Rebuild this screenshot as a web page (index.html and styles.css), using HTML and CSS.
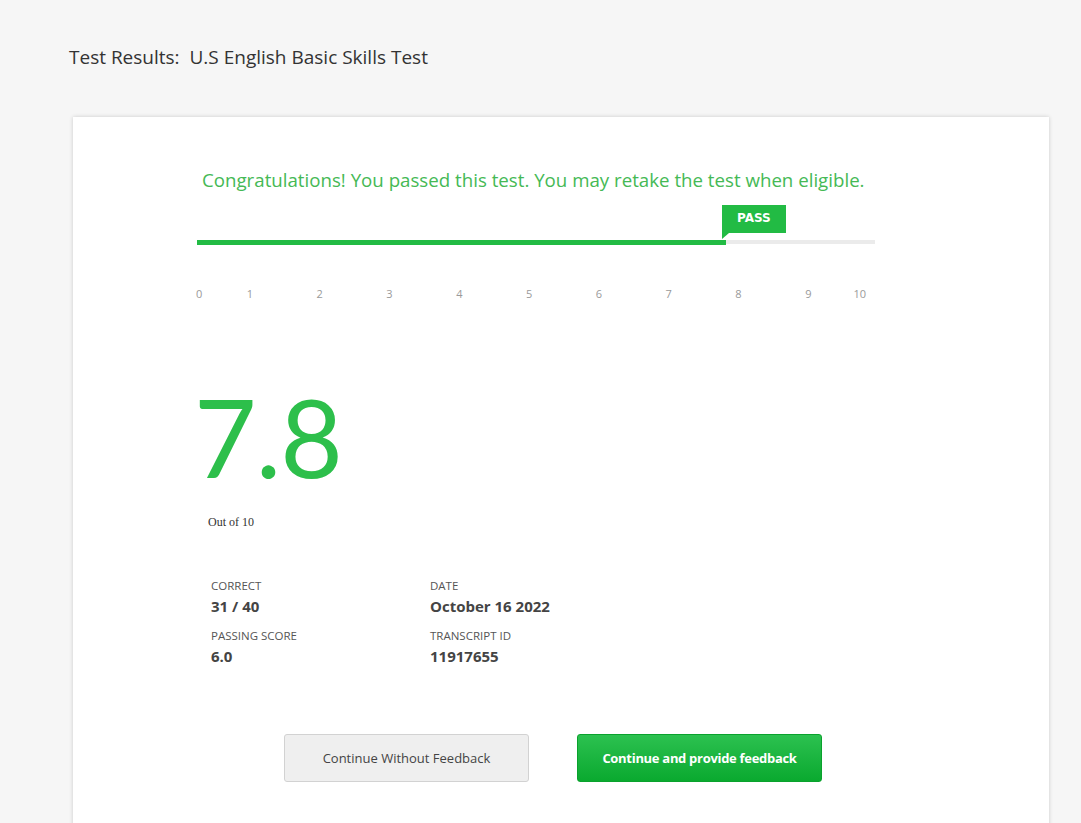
FILE: index.html
```html
<!DOCTYPE html>
<html>
<head>
<meta charset="utf-8">
<link rel="stylesheet" href="styles.css">
</head>
<body>
<h1 class="page-title">Test Results:&nbsp; U.S English Basic Skills Test</h1>
<div class="card">
  <div class="content">
    <p class="congrats">Congratulations! You passed this test. You may retake the test when eligible.</p>
    <div class="meter">
      <div class="track">
        <div class="fill" style="width: 78%"></div>
        <div class="pass" style="left: 78%">PASS</div>
      </div>
    </div>
    <div class="ticks">
      <span class="tick first">0</span>
      <span class="tick">1</span>
      <span class="tick">2</span>
      <span class="tick">3</span>
      <span class="tick">4</span>
      <span class="tick">5</span>
      <span class="tick">6</span>
      <span class="tick">7</span>
      <span class="tick">8</span>
      <span class="tick">9</span>
      <span class="tick last">10</span>
    </div>
    <div class="score">7.8</div>
    <div class="outof">Out of 10</div>
    <div class="stats">
      <div class="stat">
        <div class="label">CORRECT</div>
        <div class="value">31 / 40</div>
      </div>
      <div class="stat">
        <div class="label">DATE</div>
        <div class="value">October 16 2022</div>
      </div>
      <div class="stat">
        <div class="label">PASSING SCORE</div>
        <div class="value">6.0</div>
      </div>
      <div class="stat">
        <div class="label">TRANSCRIPT ID</div>
        <div class="value">11917655</div>
      </div>
    </div>
  </div>
  <div class="actions">
    <button class="btn btn-plain">Continue Without Feedback</button>
    <button class="btn btn-green">Continue and provide feedback</button>
  </div>
</div>
</body>
</html>
```
FILE: styles.css
```css
html, body {
  margin: 0;
  padding: 0;
  background: #f6f6f6;
  font-family: "Open Sans", Lato, sans-serif;
  color: #333;
  overflow: hidden;
  height: 823px;
}
.page-title {
  margin: 0;
  padding: 45px 0 0 69px;
  font-size: 19px;
  font-weight: normal;
  color: #333;
  line-height: 24px;
}
.card {
  margin: 48px 0 0 73px;
  width: 976px;
  height: 720px;
  background: #fff;
  box-shadow: 0 0 4px rgba(0,0,0,0.18);
}
.content {
  margin-left: 124px;
  width: 678px;
  padding-top: 51px;
}
.congrats {
  margin: 0 0 0 5px;
  font-size: 18.7px;
  line-height: 24px;
  color: #45b955;
}
.meter {
  margin-top: 49px;
  height: 12px;
  position: relative;
}
.track {
  position: relative;
  margin-top: 5px;
  height: 4px;
  background: #ebebeb;
  width: 678px;
}
.fill {
  height: 5px;
  margin-top: -1px;
  background: #22bb44;
}
.pass {
  position: absolute;
  top: -35px;
  margin-left: -4px;
  width: 64px;
  height: 28px;
  background: #22bb44;
  color: #fff;
  font-family: "DejaVu Sans", sans-serif;
  font-weight: bold;
  font-size: 12px;
  line-height: 26px;
  text-align: center;
}
.pass::after {
  content: "";
  position: absolute;
  left: 0;
  bottom: -6px;
  border-top: 6px solid #22bb44;
  border-right: 7px solid transparent;
}
.ticks {
  display: flex;
  margin-top: 35px;
  margin-left: -1px;
  font-size: 11px;
  color: #9a9a9a;
  line-height: 14px;
}
.tick {
  width: 69.8px;
  text-align: center;
}
.tick.first {
  width: 19px;
  text-align: left;
}
.tick.last {
  width: 23px;
  text-align: right;
}
.score {
  margin-top: 81px;
  font-family: Lato, sans-serif;
  font-size: 108px;
  line-height: 108px;
  font-weight: normal;
  color: #2dbf4b;
  letter-spacing: -1px;
  margin-left: -3px;
}
.outof {
  margin-top: 25px;
  margin-left: 11px;
  font-family: "Liberation Serif", serif;
  font-size: 12px;
  color: #333;
}
.stats {
  margin-top: 49px;
  margin-left: 14px;
  display: grid;
  grid-template-columns: 219px 220px;
  row-gap: 14px;
}
.label {
  font-size: 11.5px;
  color: #555;
  line-height: 14px;
}
.value {
  margin-top: 4px;
  font-size: 15px;
  font-weight: bold;
  color: #444;
  line-height: 18px;
}
.actions {
  display: flex;
  gap: 48px;
  margin-left: 211px;
  margin-top: 69px;
}
.btn {
  width: 245px;
  height: 48px;
  border-radius: 3px;
  font-family: "Open Sans", Lato, sans-serif;
  font-size: 13px;
  cursor: pointer;
}
.btn-plain {
  background: #efefef;
  border: 1px solid #d2d2d2;
  color: #444;
}
.btn-green {
  background: linear-gradient(#2cc150, #0aa92f);
  border: 1px solid #0aa22d;
  color: #fff;
  font-weight: bold;
  letter-spacing: -0.3px;
}
```
